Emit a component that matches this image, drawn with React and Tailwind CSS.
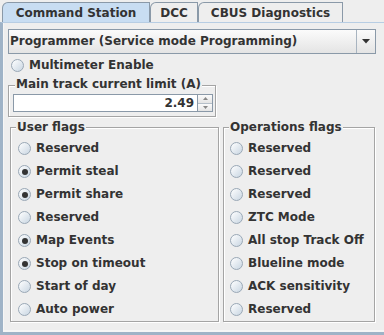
import React from "react";

const Radio = ({ checked }) => (
  <span className="w-[13px] h-[13px] rounded-full border border-[#9aa8b6] bg-linear-to-br from-white to-[#c9d6e2] flex items-center justify-center shrink-0">
    {checked && <span className="w-[6px] h-[6px] rounded-full bg-[#333333]" />}
  </span>
);

const Item = ({ label, checked }) => (
  <div className="h-[23px] flex items-center gap-[5px] whitespace-nowrap">
    <Radio checked={checked} />
    <span>{label}</span>
  </div>
);

const Tab = ({ label, selected, w }) => (
  <div
    className={`h-[20px] pt-[1px] flex items-center justify-center border-t border-r border-l border-[#8a99a8] rounded-tl-[6px] ${w} ${
      selected ? "bg-[#c8ddf2]" : "bg-[#eeeeee]"
    }`}
  >
    {label}
  </div>
);

export default function App() {
  const user = [
    ["Reserved", false],
    ["Permit steal", true],
    ["Permit share", true],
    ["Reserved", false],
    ["Map Events", true],
    ["Stop on timeout", true],
    ["Start of day", false],
    ["Auto power", false],
  ];
  const ops = [
    "Reserved",
    "Reserved",
    "Reserved",
    "ZTC Mode",
    "All stop Track Off",
    "Blueline mode",
    "ACK sensitivity",
    "Reserved",
  ];
  return (
    <div className="w-[384px] h-[335px] bg-[#eeeeee] flex flex-col text-[12px] leading-[15px] font-bold text-[#333333] font-['DejaVu_Sans',sans-serif] overflow-hidden whitespace-nowrap">
      <div className="h-[22px] flex items-end pl-[2px] shrink-0">
        <Tab label="Command Station" selected w="w-[148px]" />
        <Tab label="DCC" w="w-[48px]" />
        <Tab label="CBUS Diagnostics" w="w-[145px]" />
      </div>
      <div className="flex-1 flex flex-col border-l-[3px] border-b-[3px] border-t border-l-[#9fb3c7] border-b-[#9fb3c7] border-t-[#b7cde3] shadow-[inset_1px_0_0_#f6f6f6,inset_0_-2px_0_#f6f6f6]">
        <div className="mt-[6px] ml-[5px] w-[368px] h-[25px] flex border border-[#8a99a8] bg-linear-to-b from-[#fbfbfb] to-[#e4e4e4]">
          <div className="flex-1 flex items-center pl-[1px]">Programmer (Service mode Programming)</div>
          <div className="w-[19px] border-l border-[#a8b4c0] flex items-center justify-center">
            <svg width="8" height="5" viewBox="0 0 8 5">
              <path d="M0 0H8L4 4.5Z" fill="#333333" />
            </svg>
          </div>
        </div>
        <div className="mt-[1px] h-[20px] pl-[8px] flex items-center gap-[5px]">
          <Radio />
          <span>Multimeter Enable</span>
        </div>
        <div className="mt-[10px] ml-[5px] w-[208px] border border-[#a4a4a4] shadow-[1px_1px_0_#ffffff,inset_1px_1px_0_#ffffff] flex flex-col">
          <div className="-mt-[9px] ml-[6px] px-[1px] w-fit bg-[#eeeeee]">Main track current limit (A)</div>
          <div className="mt-[2px] mb-[4px] ml-[4px] flex h-[18px]">
            <div className="w-[185px] bg-white border border-[#8a99a8] flex items-center justify-end pr-[3px]">2.49</div>
            <div className="w-[15px] flex flex-col border border-l-0 border-[#8a99a8]">
              <div className="flex-1 flex items-center justify-center bg-linear-to-b from-[#fbfbfb] to-[#e4e4e4] border-b border-[#b5bfc9]">
                <svg width="5" height="3" viewBox="0 0 5 3"><path d="M0 3H5L2.5 0Z" fill="#888" /></svg>
              </div>
              <div className="flex-1 flex items-center justify-center bg-linear-to-b from-[#fbfbfb] to-[#e4e4e4]">
                <svg width="5" height="3" viewBox="0 0 5 3"><path d="M0 0H5L2.5 3Z" fill="#888" /></svg>
              </div>
            </div>
          </div>
        </div>
        <div className="mt-[10px] flex items-start">
          <div className="ml-[7px] w-[209px] border border-[#a4a4a4] shadow-[1px_1px_0_#ffffff,inset_1px_1px_0_#ffffff] flex flex-col">
            <div className="-mt-[8px] ml-[5px] px-[1px] w-fit bg-[#eeeeee]">User flags</div>
            <div className="pt-[2px] pl-[7px] flex flex-col">
              {user.map(([l, c], i) => (
                <Item key={i} label={l} checked={c} />
              ))}
            </div>
          </div>
          <div className="ml-[4px] w-[152px] border border-[#a4a4a4] shadow-[1px_1px_0_#ffffff,inset_1px_1px_0_#ffffff] flex flex-col">
            <div className="-mt-[8px] ml-[5px] px-[1px] w-fit bg-[#eeeeee]">Operations flags</div>
            <div className="pt-[2px] pl-[6px] flex flex-col">
              {ops.map((l, i) => (
                <Item key={i} label={l} />
              ))}
            </div>
          </div>
        </div>
      </div>
    </div>
  );
}
